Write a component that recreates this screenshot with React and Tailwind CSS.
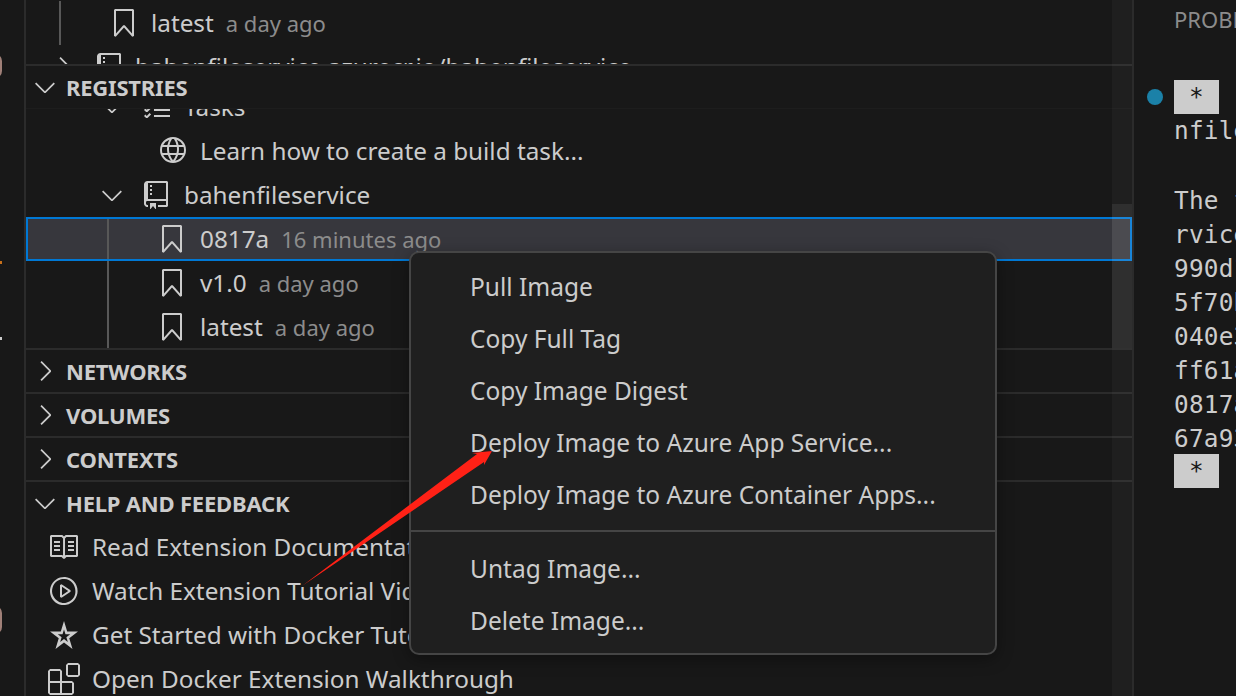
import {
  VscBook,
  VscBookmark,
  VscChecklist,
  VscChevronDown,
  VscChevronRight,
  VscExtensions,
  VscGlobe,
  VscPlayCircle,
  VscRepo,
  VscStarEmpty,
} from "react-icons/vsc";

const helpRows = [
  { icon: VscBook, label: "Read Extension Documentation" },
  { icon: VscPlayCircle, label: "Watch Extension Tutorial Videos" },
  { icon: VscStarEmpty, label: "Get Started with Docker Tutorial" },
  { icon: VscExtensions, label: "Open Docker Extension Walkthrough" },
];

const monoLines = ["990d1", "5f70b", "040e3", "ff61a", "0817a", "67a93"];

const Section = ({ title, open }) => (
  <div className="flex h-[42px] shrink-0 items-center text-[22px] font-bold text-[#cccccc]">
    <span className="flex w-[35px] justify-end">
      {open ? <VscChevronDown size={32} /> : <VscChevronRight size={32} />}
    </span>
    <span className="ml-[5px] tracking-[-0.2px]">{title}</span>
  </div>
);

const TagRow = ({ label, age, selected }) => (
  <div
    className={`relative flex h-[44px] items-center ${
      selected ? "border-2 border-[#0078d4] bg-[#37373d] pl-[128px]" : "pl-[130px]"
    }`}
  >
    <span className={`absolute top-0 bottom-0 w-[2px] bg-[#585858] ${selected ? "left-[79px]" : "left-[81px]"}`} />
    <VscBookmark size={32} className="shrink-0 text-[#cccccc]" />
    <span className="ml-[12px] text-[#cccccc]">{label}</span>
    <span className="ml-[12px] text-[22px] text-[#8c8c8c]">{age}</span>
  </div>
);

const MenuItem = ({ children }) => (
  <div className="flex h-[52px] items-center pl-[59px] text-[24.5px] text-[#cccccc]">{children}</div>
);

export default function App() {
  return (
    <div className="relative flex h-[696px] w-[1236px] overflow-hidden bg-[#181818] font-['Noto_Sans',sans-serif] text-[24.3px] leading-[44px]">
      {/* activity bar sliver */}
      <div className="relative w-[26px] shrink-0 border-r-2 border-[#2b2b2b]">
        <span className="absolute -left-[12px] top-[54px] h-[24px] w-[14px] rounded-full border-2 border-[#a08078]" />
        <span className="absolute -left-[12px] top-[606px] h-[28px] w-[14px] rounded-full bg-[#a08078]" />
        <span className="absolute left-0 top-[261px] h-[3px] w-[2px] bg-[#c8701a]" />
        <span className="absolute left-0 top-[337px] h-[3px] w-[2px] bg-[#cccccc]" />
      </div>

      {/* sidebar */}
      <div className="relative flex w-[1106px] shrink-0 flex-col">
        <div className="h-[64px] shrink-0 overflow-hidden">
          <div className="relative mt-[1px] flex h-[44px] items-center pl-[82px]">
            <span className="absolute left-[33px] top-0 bottom-0 w-[2px] bg-[#585858]" />
            <VscBookmark size={32} className="shrink-0 text-[#cccccc]" />
            <span className="ml-[11px] text-[#cccccc]">latest</span>
            <span className="ml-[12px] text-[22px] text-[#8c8c8c]">a day ago</span>
          </div>
          <div className="flex h-[44px] items-center pl-[22px] text-[#cccccc]">
            <VscChevronRight size={32} />
            <VscRepo size={32} className="ml-[13px]" />
            <span className="ml-[10px]">bahenfileservice.azurecr.io/bahenfileservice</span>
          </div>
        </div>

        <div className="shrink-0 border-t-2 border-[#2b2b2b]">
          <Section title="REGISTRIES" open />
        </div>
        <div className="h-[240px] shrink-0 overflow-hidden border-t border-[#1d1d1d]">
          <div className="-mt-[24px]">
            <div className="flex h-[44px] items-center pl-[70px] text-[#cccccc]">
              <VscChevronDown size={32} />
              <VscChecklist size={32} className="ml-[12px]" />
              <span className="ml-[12px]">Tasks</span>
            </div>
            <div className="flex h-[44px] items-center pl-[130px] text-[#cccccc]">
              <VscGlobe size={32} />
              <span className="ml-[12px]">Learn how to create a build task...</span>
            </div>
            <div className="flex h-[44px] items-center pl-[70px] text-[#cccccc]">
              <VscChevronDown size={32} />
              <VscRepo size={32} className="ml-[12px]" />
              <span className="ml-[12px]">bahenfileservice</span>
            </div>
            <TagRow label="0817a" age="16 minutes ago" selected />
            <TagRow label="v1.0" age="a day ago" />
            <TagRow label="latest" age="a day ago" />
          </div>
        </div>

        <div className="shrink-0 border-t-2 border-[#2b2b2b]">
          <Section title="NETWORKS" />
        </div>
        <div className="shrink-0 border-t-2 border-[#2b2b2b]">
          <Section title="VOLUMES" />
        </div>
        <div className="shrink-0 border-t-2 border-[#2b2b2b]">
          <Section title="CONTEXTS" />
        </div>
        <div className="shrink-0 border-t-2 border-[#2b2b2b]">
          <Section title="HELP AND FEEDBACK" open />
        </div>
        <div className="mt-[1px]">
          {helpRows.map(({ icon: Icon, label }) => (
            <div key={label} className="flex h-[44px] items-center pl-[22px] text-[#cccccc]">
              <Icon size={32} className="shrink-0" />
              <span className="ml-[12px] whitespace-nowrap">{label}</span>
            </div>
          ))}
        </div>

        {/* scrollbar track */}
        <div className="absolute right-0 top-0 bottom-0 w-[20px] bg-white/[0.03]" />
        <div className="absolute right-0 top-[204px] h-[144px] w-[20px] bg-white/[0.07]" />
      </div>

      {/* output panel */}
      <div className="w-[104px] shrink-0 border-l-2 border-[#2b2b2b] pl-[40px] text-[#cccccc]">
        <div className="mt-[1px] h-[79px] whitespace-nowrap text-[22px] leading-[36px] text-[#8c8c8c]">PROBLEMS</div>
        <div className="whitespace-nowrap font-['DejaVu_Sans_Mono',monospace] text-[24.4px] leading-[34px] tracking-[0.2px]">
          <div className="relative h-[34px]">
            <span className="absolute -left-[27px] top-[9px] h-[16px] w-[16px] rounded-full bg-[#1b81a8]" />
            <span className="inline-block h-[34px] w-[45px] bg-[#cccccc] text-center text-[#181818]">*</span>
          </div>
          <div>nfile</div>
          <div className="h-[36px]" />
          <div>The f</div>
          <div>rvice</div>
          {monoLines.map((line) => (
            <div key={line}>{line}</div>
          ))}
          <div className="-mt-[2px] h-[34px] w-[45px] bg-[#cccccc] text-center text-[#181818]">*</div>
        </div>
      </div>

      {/* context menu */}
      <div className="absolute left-[409px] top-[251px] w-[588px] rounded-[10px] border-2 border-[#454545] bg-[#1f1f1f] pt-[8px] pb-[6px] shadow-[0_4px_16px_rgba(0,0,0,0.36)]">
        <MenuItem>Pull Image</MenuItem>
        <MenuItem>Copy Full Tag</MenuItem>
        <MenuItem>Copy Image Digest</MenuItem>
        <MenuItem>Deploy Image to Azure App Service...</MenuItem>
        <MenuItem>Deploy Image to Azure Container Apps...</MenuItem>
        <div className="mt-[9px] mb-[11px] h-[2px] bg-[#454545]" />
        <MenuItem>Untag Image...</MenuItem>
        <MenuItem>Delete Image...</MenuItem>
      </div>

      {/* red annotation arrow */}
      <svg className="absolute left-0 top-0" width="1236" height="696" viewBox="0 0 1236 696">
        <polygon points="302,586 477,454 472,453 492,451 484,465 484,462" fill="#ff2116" />
      </svg>
    </div>
  );
}
